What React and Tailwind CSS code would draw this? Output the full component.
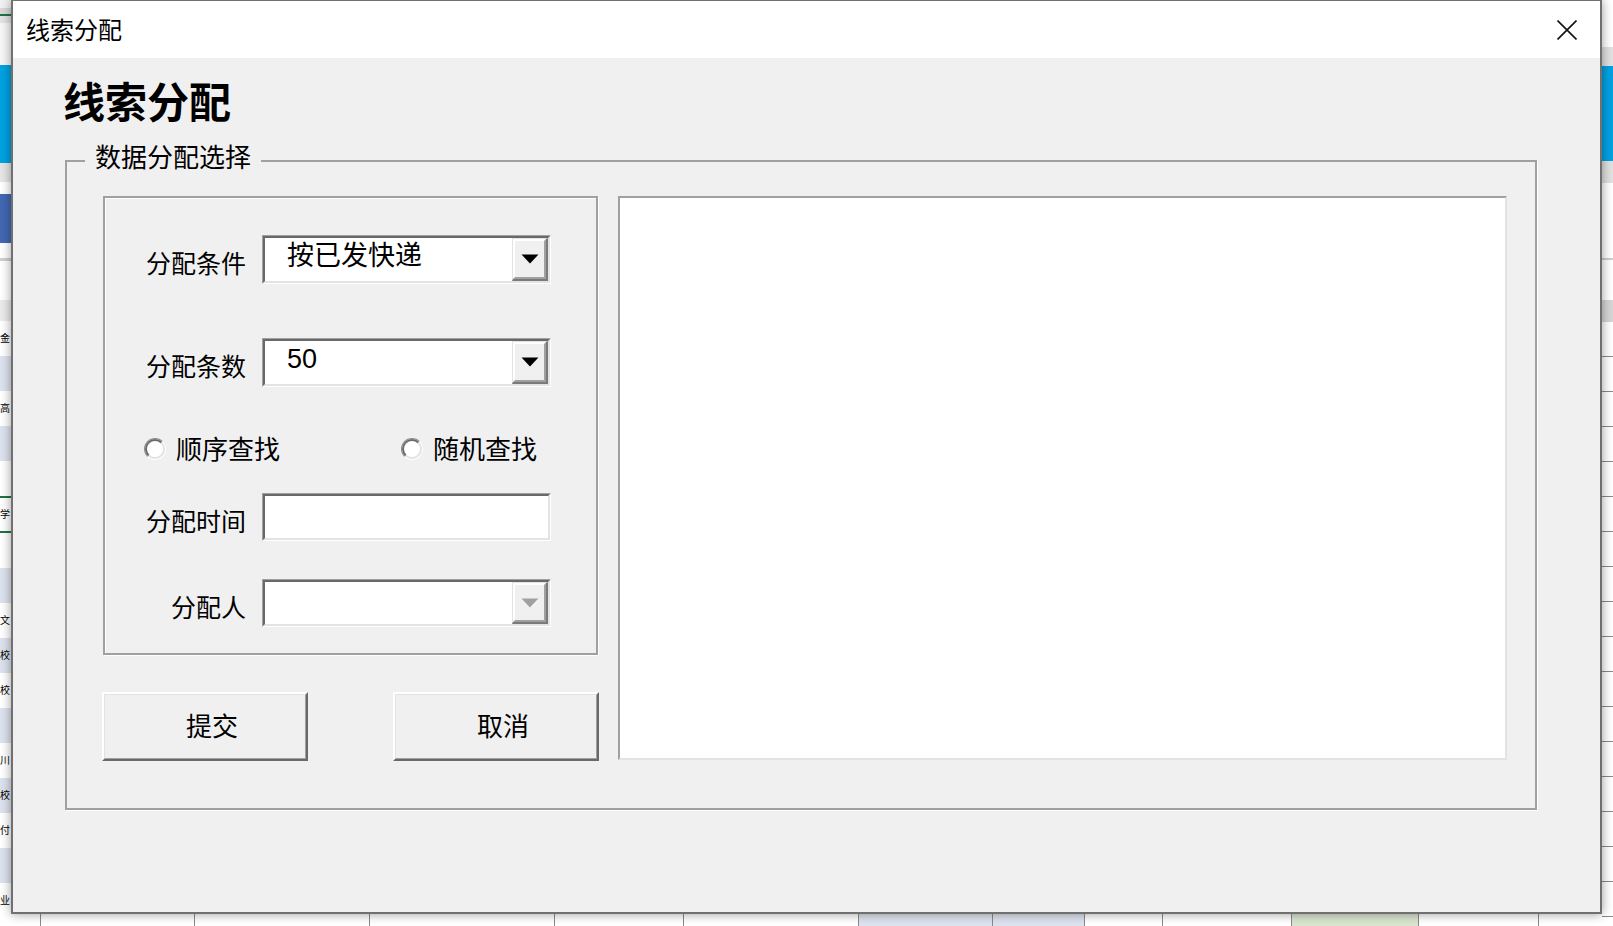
import React from 'react';

// rows of the spreadsheet that peeks out from behind the dialog
const leftRows = [
    ['h-[8px] bg-[#f2f2f2]', ''],
    ['h-[6px] bg-[#d9d9d9]', ''],
    ['h-[2px] bg-[#217346]', ''],
    ['h-[7px] bg-[#e3e3e3]', ''],
    ['h-[42px] bg-[#f7f7f7]', ''],
    ['h-[98px] bg-[#00a2e2]', ''],
    ['h-[19px] bg-[#e6e6e6]', ''],
    ['h-[12px] bg-white', ''],
    ['h-[49px] bg-[#4468b4]', ''],
    ['h-[15px] bg-white', ''],
    ['h-[3px] bg-[#cfcfcf]', ''],
    ['h-[39px] bg-white', ''],
    ['h-[21px] bg-[#ebebeb]', ''],
    ['h-[35px] bg-white', '金'],
    ['h-[35px] bg-[#dde3ee]', ''],
    ['h-[35px] bg-white', '高'],
    ['h-[35px] bg-[#dde3ee]', ''],
    ['h-[35px] bg-white', ''],
    ['h-[37px] bg-white border-y-2 border-[#217346]', '学'],
    ['h-[35px] bg-white', ''],
    ['h-[35px] bg-[#dde3ee]', ''],
    ['h-[35px] bg-white', '文'],
    ['h-[35px] bg-[#dde3ee]', '校'],
    ['h-[35px] bg-white', '校'],
    ['h-[35px] bg-[#dde3ee]', ''],
    ['h-[35px] bg-white', '川'],
    ['h-[35px] bg-[#dde3ee]', '校'],
    ['h-[35px] bg-white', '付'],
    ['h-[35px] bg-[#dde3ee]', ''],
    ['h-[35px] bg-white', '业'],
];

const rightRows = [
    'h-[47px] bg-white',
    'h-[19px] bg-[#e1e1e1]',
    'h-[95px] bg-[#00a2e2]',
    'h-[22px] bg-[#e1e1e1]',
    'h-[75px] bg-white',
    'h-[2px] bg-[#cfcfcf]',
    'h-[40px] bg-white',
    'h-[22px] bg-[#d6d6d6]',
];

const bottomCells = [
    'w-[30px] bg-white',
    'w-[154px] bg-white',
    'w-[175px] bg-white',
    'w-[185px] bg-white',
    'w-[129px] bg-white',
    'w-[175px] bg-white',
    'w-[134px] bg-[#dde3ee]',
    'w-[92px] bg-[#dde3ee]',
    'w-[78px] bg-white',
    'w-[129px] bg-white',
    'w-[127px] bg-[#d9e5cf]',
    'w-[120px] bg-white',
];

const LeftStrip = () => (
    <div className="w-[11px] flex flex-col shrink-0">
        {leftRows.map(([cls, ch], i) => (
            <div key={i} className={`${cls} flex items-center text-[10px] leading-none text-black`}>
                {ch}
            </div>
        ))}
    </div>
);

const RightStrip = () => (
    <div className="w-[11px] flex flex-col shrink-0">
        {rightRows.map((cls, i) => (
            <div key={i} className={cls}></div>
        ))}
        {Array.from({ length: 17 }).map((_, i) => (
            <div key={i} className="h-[35px] bg-white border-b border-[#8a8a8a]"></div>
        ))}
    </div>
);

const BottomStrip = () => (
    <div className="h-[12px] flex">
        {bottomCells.map((cls, i) => (
            <div key={i} className={`${cls} border-r border-[#8a8a8a]`}></div>
        ))}
        <div className="flex-1 bg-white"></div>
    </div>
);

const DropArrow = ({ disabled }) => (
    <svg width="18" height="10" viewBox="0 0 18 10">
        {disabled && <path d="M2.5 1.5 L17.5 1.5 L10 9.5 Z" fill="#ffffff" />}
        <path d="M0.5 0.5 L17.5 0.5 L9 9.5 Z" fill={disabled ? '#a0a0a0' : '#000000'} />
    </svg>
);

const DropButton = ({ disabled }) => (
    <div className="w-[36px] h-full border-t border-l border-b-2 border-r-2 border-t-[#e3e3e3] border-l-[#e3e3e3] border-b-[#7a7a7a] border-r-[#7a7a7a]">
        <div className="w-full h-full flex items-center justify-center bg-[#f0f0f0] border-2 border-t-white border-l-white border-b-[#a0a0a0] border-r-[#a0a0a0]">
            <DropArrow disabled={disabled} />
        </div>
    </div>
);

const Sunken = ({ className = '', children }) => (
    <div className={`border border-t-[#a0a0a0] border-l-[#a0a0a0] border-b-white border-r-white ${className}`}>
        <div className="flex h-full border-2 border-t-[#696969] border-l-[#696969] border-b-[#e3e3e3] border-r-[#e3e3e3] bg-white">
            {children}
        </div>
    </div>
);

const Combo = ({ value, disabled, className = 'h-[49px]' }) => (
    <Sunken className={`w-[289px] ${className}`}>
        <div className="flex-1 flex items-center pl-[22px] pb-[7px] text-[27px] leading-none text-black">
            {value}
        </div>
        <DropButton disabled={disabled} />
    </Sunken>
);

const Row = ({ label, className = '', children }) => (
    <div className={`flex items-center ${className}`}>
        <span className="w-[141px] pt-[10px] text-right text-[25px] leading-none text-black">{label}</span>
        <div className="ml-[16px]">{children}</div>
    </div>
);

const Radio = ({ label, className = '' }) => (
    <div className={`flex items-center ${className}`}>
        <span className="w-[22px] h-[22px] rounded-full border border-t-[#8c8c8c] border-l-[#8c8c8c] border-b-white border-r-white">
            <span className="block w-full h-full rounded-full bg-white border-2 border-t-[#6a6a6a] border-l-[#6a6a6a] border-b-[#e3e3e3] border-r-[#e3e3e3]"></span>
        </span>
        <span className="ml-[10px] pt-[2px] text-[26px] leading-none text-black">{label}</span>
    </div>
);

const Btn = ({ children }) => (
    <button className="w-[206px] h-[69px] border-2 border-t-white border-l-white border-b-[#696969] border-r-[#696969] bg-[#f0f0f0]">
        <div className="w-full h-full flex items-center justify-center pl-[14px] border border-t-[#e3e3e3] border-l-[#e3e3e3] border-b-[#a0a0a0] border-r-[#a0a0a0] text-[26px] leading-none text-black">
            {children}
        </div>
    </button>
);

export default function App() {
    return (
        <div className="relative flex w-[1613px] h-[926px] overflow-hidden bg-white font-['Liberation_Sans','Noto_Sans_CJK_SC',sans-serif]">
            <LeftStrip />
            <div className="flex-1 flex flex-col justify-end">
                <BottomStrip />
            </div>
            <RightStrip />

            {/* the dialog window */}
            <div className="absolute left-[11px] top-0 w-[1591px] h-[914px] flex flex-col border-x-2 border-b-2 border-t border-[#707070] shadow-[0_0_10px_rgba(0,0,0,0.4)]">
                <div className="h-[57px] shrink-0 bg-white flex items-center justify-between pl-[13px] pr-[23px]">
                    <span className="pt-[2px] text-[24px] leading-none text-black">线索分配</span>
                    <svg width="20" height="20" viewBox="0 0 20 20">
                        <path d="M0.5 0.5 L19.5 19.5 M19.5 0.5 L0.5 19.5" stroke="#111111" strokeWidth="1.6" />
                    </svg>
                </div>

                <div className="flex-1 bg-[#f0f0f0] pt-[25px] pl-[52px]">
                    <h1 className="ml-[-2px] text-[42px] font-bold leading-none text-black">线索分配</h1>

                    <fieldset className="mt-[18px] w-[1472px] border-2 border-[#a0a0a0] shadow-[1px_1px_0_#ffffff] pl-[35px] pr-[28px] pt-[17px] pb-[47px]">
                        <legend className="ml-[-17px] px-[10px] pb-[6px] text-[26px] leading-[30px] text-black">数据分配选择</legend>

                        <div className="flex">
                            <div className="w-[497px] flex flex-col">
                                <div className="mx-[1px] h-[459px] flex flex-col pt-[37px] border-2 border-[#a0a0a0] shadow-[1px_1px_0_#ffffff,inset_1px_1px_0_#ffffff]">
                                    <Row label="分配条件">
                                        <Combo value="按已发快递" />
                                    </Row>
                                    <Row label="分配条数" className="mt-[54px]">
                                        <Combo value="50" />
                                    </Row>
                                    <div className="mt-[47px] h-[29px] flex items-center pl-[39px]">
                                        <Radio label="顺序查找" className="w-[257px]" />
                                        <Radio label="随机查找" />
                                    </div>
                                    <Row label="分配时间" className="mt-[30px]">
                                        <Sunken className="w-[289px] h-[48px]" />
                                    </Row>
                                    <Row label="分配人" className="mt-[38px]">
                                        <Combo value="" disabled className="h-[48px]" />
                                    </Row>
                                </div>
                                <div className="mt-[37px] flex justify-between">
                                    <Btn>提交</Btn>
                                    <Btn>取消</Btn>
                                </div>
                            </div>

                            <div className="ml-[19px] w-[889px] h-[564px] bg-white border-2 border-t-[#a0a0a0] border-l-[#a0a0a0] border-b-[#e3e3e3] border-r-[#e3e3e3]"></div>
                        </div>
                    </fieldset>
                </div>
            </div>
        </div>
    );
}
